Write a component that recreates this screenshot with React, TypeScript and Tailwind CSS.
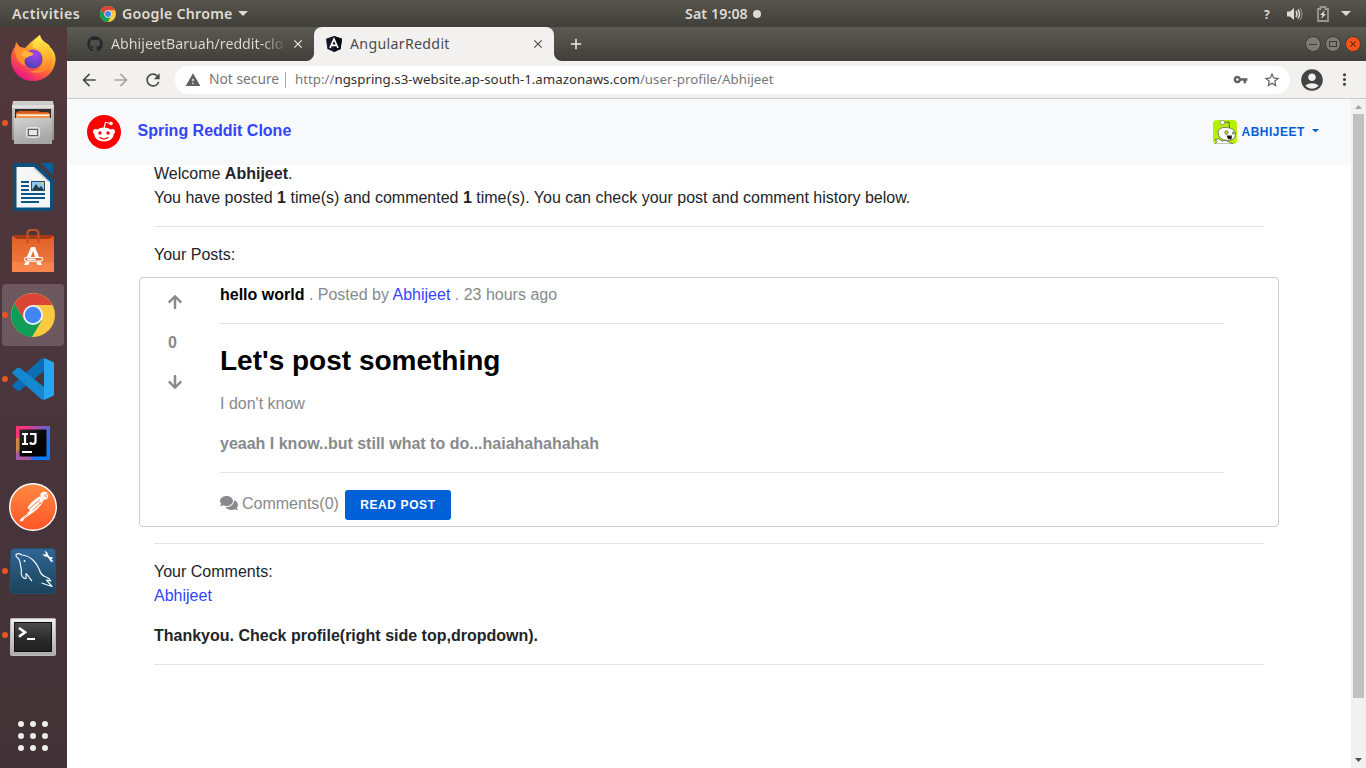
import type { ReactNode } from "react";
import { FaArrowDown, FaArrowUp, FaComments, FaGithub } from "react-icons/fa";
import {
  MdAccountCircle,
  MdAdd,
  MdArrowBack,
  MdArrowForward,
  MdClose,
  MdMoreVert,
  MdRefresh,
  MdStarBorder,
  MdVpnKey,
  MdWarning,
} from "react-icons/md";

function ChromeLogo({ className }: { className: string }) {
  return (
    <svg viewBox="0 0 44 44" className={className}>
      <circle cx="22" cy="22" r="22" fill="#fdca3f" />
      <path d="M22 22 L22 12 L41.5 12 A22 22 0 0 0 3.4 10.5 L13.3 27Z" fill="#db4437" />
      <path d="M3.4 10.5 A22 22 0 0 0 21 44 L31 27 L22 22 L13.3 27Z" fill="#0f9d58" />
      <circle cx="22" cy="22" r="10" fill="#f4f4f4" />
      <circle cx="22" cy="22" r="8.2" fill="#4285f4" />
    </svg>
  );
}

function Icon({ children }: { children: ReactNode }) {
  return (
    <svg viewBox="1 0 64 64" className="h-16 w-16">
      {children}
    </svg>
  );
}

function FirefoxIcon() {
  return (
    <Icon>
      <defs>
        <linearGradient id="ffBody" x1="0.8" y1="0.1" x2="0.25" y2="0.95">
          <stop offset="0" stopColor="#fff14a" />
          <stop offset="0.35" stopColor="#ffa52a" />
          <stop offset="0.65" stopColor="#ff5a3c" />
          <stop offset="1" stopColor="#e8158a" />
        </linearGradient>
        <linearGradient id="ffTail" x1="0.4" y1="0" x2="0.7" y2="1">
          <stop offset="0" stopColor="#fff44f" />
          <stop offset="0.6" stopColor="#ffb82e" />
          <stop offset="1" stopColor="#ff7a30" />
        </linearGradient>
        <radialGradient id="ffGlobe" cx="0.6" cy="0.25" r="0.8">
          <stop offset="0" stopColor="#a644ee" />
          <stop offset="1" stopColor="#4a3fb5" />
        </radialGradient>
      </defs>
      <path d="M11 32 C11 26 13 22 15 20 L16 15 L20 20 L25 21 L31 15 L40 8 C41 14 47 16 49 18 L50 20 C55 25 56 30 55.5 34 C54 46 45 54 33 54 C20 54 11 44 11 32Z" fill="url(#ffBody)" />
      <path d="M40 8 C34 12 32 17 33 21 C41 21 44 28 43 34 C42 42 36 45 29 44 C36 48 47 46 51 38 C54 30 52 24 49 20 C46 16 40 13 40 8Z" fill="url(#ffTail)" opacity="0.85" />
      <circle cx="33" cy="32" r="9.5" fill="url(#ffGlobe)" />
      <path d="M15 20 L20 20 L24 22 L33 26 C34 28 30 29 27 30 C24 32 24 36 26 39 C19 37 14 29 15 20Z" fill="#ff9030" />
      <path d="M24 23 L33 27 C33 29 29 28.5 26 31 L21 28Z" fill="#ffb43c" />
    </Icon>
  );
}

function FilesIcon() {
  return (
    <Icon>
      <defs>
        <linearGradient id="fileBox" x1="0" y1="0" x2="0" y2="1">
          <stop offset="0" stopColor="#d0d0d0" />
          <stop offset="1" stopColor="#8e8e8e" />
        </linearGradient>
        <linearGradient id="fileFront" x1="0" y1="0" x2="0.4" y2="1">
          <stop offset="0" stopColor="#d2d2d2" />
          <stop offset="1" stopColor="#a6a6a6" />
        </linearGradient>
      </defs>
      <path d="M13 10 H53 L54 16 V49 H12 V16Z" fill="url(#fileBox)" />
      <rect x="12" y="14" width="42" height="3" fill="#dedede" />
      <rect x="15" y="18" width="36" height="10" fill="#332e2b" />
      <path d="M17 21 L19 20 H38 L40 21 H48 L49 22 V28 H16 V22Z" fill="#d45a18" />
      <path d="M16 22.5 H50 V28 H16Z" fill="#f0924a" />
      <path d="M17 23.5 H49 V25 H17Z" fill="#fff0de" />
      <rect x="14" y="27" width="38" height="26" fill="url(#fileFront)" />
      <rect x="26.5" y="36.5" width="13" height="10" rx="2" fill="#bdbdbd" stroke="#e8e8e8" />
      <rect x="28.5" y="38.5" width="9" height="6" fill="#e6e6e6" stroke="#606060" />
    </Icon>
  );
}

function WriterIcon() {
  return (
    <Icon>
      <path d="M15 8 H35 L53 24 V54 Q53 56 51 56 H15 Q13 56 13 54 V10 Q13 8 15 8Z" fill="#0b4f7c" />
      <path d="M41 8 H51 Q53 8 53 10 V20 Q47 15 41 8Z" fill="#055f9c" />
      <path d="M16.5 12 H34 L50 27 V52.5 H16.5Z" fill="#f6f6f6" />
      <path d="M34 12 V14 L49 28 H50 V27Z" fill="#cfcfcf" />
      <path d="M21 27 H29 M21 31 H29 M21 35 H29 M21 39 H45 M21 43 H45 M21 47 H39" stroke="#0b5686" strokeWidth="2" />
      <rect x="31.5" y="26.5" width="13" height="9" fill="#8dc8ee" stroke="#27506e" />
      <path d="M32 35 L36 29 L39 33 L41 31 L44 35Z" fill="#283c48" />
      <circle cx="42.5" cy="28.5" r="1.5" fill="#ecc84a" />
    </Icon>
  );
}

function SoftwareIcon() {
  return (
    <Icon>
      <defs>
        <linearGradient id="bag" x1="0" y1="0" x2="0" y2="1">
          <stop offset="0" stopColor="#e06027" />
          <stop offset="1" stopColor="#f47f45" />
        </linearGradient>
      </defs>
      <path d="M13 16 H53 L54 20 H12Z" fill="#a83b13" />
      <path d="M12 17 L17 20 H49 L54 17 V53 H12Z" fill="url(#bag)" />
      <path d="M12 43 H54 V53 H12Z" fill="#fa8c51" opacity="0.6" />
      <path d="M27.5 24 V15 Q27.5 11 31 11 H35 Q38.5 11 38.5 15 V24" fill="none" stroke="#c84f21" strokeWidth="2.2" />
      <path d="M31 28 H35 L39.5 39 H35.5 L33 32 L30.500 39 H26.500Z M25.500 43 H29.500 L28.500 46 H24Z M36.500 43 H40.500 L42 46 H37.500Z" fill="#fff" />
      <rect x="24.5" y="38.5" width="18" height="3.6" rx="1.8" fill="#e9662c" stroke="#fff" strokeWidth="1.200" />
      <path d="M27 40.300 H35.500" stroke="#fff" strokeWidth="1.6" />
    </Icon>
  );
}

function CodeIcon() {
  return (
    <Icon>
      <path d="M44 53 V11 L53 15 Q54 15.500 54 17 V47 Q54 48.500 53 49Z" fill="#27a4f2" />
      <path d="M44 11 V24 L20 43.500 Q18.5 44.500 17 43.500 L12.5 39.500 Q12 38.500 13 37.500 L41 12Z" fill="#0b6db3" />
      <path d="M44 53 V40 L20 21 Q18.5 20 17 21 L12.5 25 Q12 26 13 27 L41 52Z" fill="#1488cf" />
    </Icon>
  );
}

function IntellijIcon() {
  return (
    <Icon>
      <defs>
        <linearGradient id="ij" x1="0" y1="0" x2="1" y2="0.6">
          <stop offset="0.2" stopColor="#fe3476" />
          <stop offset="0.65" stopColor="#765ec8" />
          <stop offset="1" stopColor="#087cfa" />
        </linearGradient>
        <linearGradient id="ijInner" x1="0" y1="0" x2="1" y2="1">
          <stop offset="0" stopColor="#2a2a2a" />
          <stop offset="0.6" stopColor="#050505" />
        </linearGradient>
      </defs>
      <rect x="16" y="15" width="34" height="34" fill="url(#ij)" />
      <path d="M16 27 L20 27 V40 L16 43Z" fill="#ce8643" />
      <path d="M16 42 L20 38 L32 49 H16Z" fill="#a85aa8" />
      <path d="M32 49 L47 35 L50 30 V49Z" fill="#087cfa" />
      <rect x="19.500" y="18.500" width="27" height="27" fill="url(#ijInner)" />
      <path d="M22 23 H28 M25 23 V33 M22 33 H28 M30 23 H36.500 M35.500 23 V30 Q35.500 33 33 33 Q31 33 29.800 31.500" fill="none" stroke="#fff" strokeWidth="2.200" />
      <rect x="22" y="40" width="10" height="2" fill="#fff" />
    </Icon>
  );
}

function PostmanIcon() {
  return (
    <Icon>
      <defs>
        <linearGradient id="pm" x1="0" y1="0" x2="0" y2="1">
          <stop offset="0" stopColor="#ff8a43" />
          <stop offset="1" stopColor="#ff5526" />
        </linearGradient>
      </defs>
      <circle cx="33" cy="32" r="23.3" fill="url(#pm)" stroke="#fff" strokeWidth="1.4" />
      <circle cx="44.3" cy="20.700" r="4" fill="#fff" />
      <path d="M44.300 20.700 L48 18.500 M44.300 20.700 L47.500 22.500" stroke="#ff7437" strokeWidth="0.800" />
      <path d="M40 21.500 C37 22.500 30 27.500 27.500 33 L30 35.500 L25.500 40 L20.500 44 L19.500 46.500 L23 46 L24.500 43.500 L33 37.500 C37.500 34.500 42 29.500 43.500 25.500Z" fill="#fff" />
      <path d="M40 24.500 L29 34 M42 26.500 L33 35.500 M28 38.500 L24.500 42.500 M39 27 L41 29" fill="none" stroke="#ff7437" strokeWidth="0.9" />
    </Icon>
  );
}

function MysqlIcon() {
  return (
    <Icon>
      <defs>
        <linearGradient id="sql" x1="0" y1="0" x2="0" y2="1">
          <stop offset="0" stopColor="#2f6796" />
          <stop offset="1" stopColor="#1b4259" />
        </linearGradient>
      </defs>
      <rect x="10.5" y="9.5" width="45" height="45" rx="4" fill="url(#sql)" stroke="#27506f" />
      <path d="M18 19 C13.500 16 17 13 22 16 C31 17 37 24 39.500 31 C40.500 35 43 37 46 38 Q49 39 51 42 L46.500 41 L52 47.500 L41.500 44 M18 19 C21 22 20 27 21.500 31 C20 36 23 40 26 39.500 L26 34.500 C28 36 30 40 32 42" fill="none" stroke="#eef5fa" strokeWidth="1.2" strokeLinejoin="round" />
      <circle cx="24.5" cy="22" r="0.9" fill="#fff" />
      <path d="M42.500 15 Q44 18.500 47 17.500 L49.500 20.500 Q50 23.500 53.500 22.500 L51.500 20.500 L53 18.500 Q51.500 17.500 50 18.300 L47.800 15.500 Q48 12.500 44.500 12 L46 14.500 L45 15.800Z" fill="#fff" />
    </Icon>
  );
}

function TerminalIcon() {
  return (
    <Icon>
      <defs>
        <linearGradient id="term" x1="0" y1="0" x2="0" y2="1">
          <stop offset="0" stopColor="#4b4c4b" />
          <stop offset="0.55" stopColor="#2b2c2b" />
          <stop offset="1" stopColor="#1e1f1e" />
        </linearGradient>
        <linearGradient id="termFrame" x1="0" y1="0" x2="0" y2="1">
          <stop offset="0" stopColor="#efefef" />
          <stop offset="1" stopColor="#aaaaaa" />
        </linearGradient>
      </defs>
      <rect x="10.5" y="15.5" width="45" height="37" rx="1" fill="url(#termFrame)" stroke="#b9b9b9" />
      <rect x="14.5" y="19.5" width="37" height="29" fill="url(#term)" stroke="#111" />
      <path d="M19 25 L25 29.3 L19 33.600" fill="none" stroke="#fff" strokeWidth="2.6" />
      <rect x="27" y="35" width="8" height="2" fill="#fff" />
    </Icon>
  );
}

const launchers: { name: string; running: boolean; icon: ReactNode }[] = [
  { name: "firefox", running: false, icon: <FirefoxIcon /> },
  { name: "files", running: true, icon: <FilesIcon /> },
  { name: "writer", running: false, icon: <WriterIcon /> },
  { name: "software", running: false, icon: <SoftwareIcon /> },
  { name: "chrome", running: true, icon: <ChromeLogo className="h-11 w-11" /> },
  { name: "code", running: true, icon: <CodeIcon /> },
  { name: "intellij", running: false, icon: <IntellijIcon /> },
  { name: "postman", running: false, icon: <PostmanIcon /> },
  { name: "mysql", running: true, icon: <MysqlIcon /> },
  { name: "terminal", running: true, icon: <TerminalIcon /> },
];

function Dock() {
  return (
    <nav className="flex w-[67px] shrink-0 flex-col bg-linear-to-b from-[#51383b] via-[#49353c] to-[#403236]">
      {launchers.map((l) => (
        <div key={l.name} className="relative flex h-16 w-[66px] items-center justify-center">
          {l.name === "chrome" && <span className="absolute top-px left-[2px] h-[62px] w-[62px] rounded bg-[#6c585e]" />}
          <span className="relative">{l.icon}</span>
          {l.running && <span className="absolute top-[29px] left-[2px] h-[6px] w-[6px] rounded-full bg-[#e95420]" />}
        </div>
      ))}
      <div className="mt-[54px] grid w-fit grid-cols-3 gap-[6px] self-start pl-[18px]">
        {Array.from({ length: 9 }, (_, i) => (
          <span key={i} className="h-[6px] w-[6px] rounded-full bg-[#eeeeec]" />
        ))}
      </div>
    </nav>
  );
}

function TopBar() {
  return (
    <header className="flex h-[27px] shrink-0 items-center bg-linear-to-b from-[#58554c] to-[#403f3a] text-[14.2px] leading-[27px] font-semibold text-[#dfdbd2]">
      <span className="ml-3 w-[88px] tracking-[0.5px] whitespace-nowrap">Activities</span>
      <ChromeLogo className="h-4 w-4" />
      <span className="ml-[6px] w-[112px] tracking-[0.25px] whitespace-nowrap">Google Chrome</span>
      <svg viewBox="0 0 10 5" className="ml-[4px] h-[5px] w-[10px]">
        <path d="M0 0H10L5 5Z" fill="#dfdbd2" />
      </svg>
      <span className="ml-[437px] w-[65px] tracking-[0.1px] whitespace-nowrap">Sat 19:08</span>
      <span className="ml-[3px] h-2 w-2 rounded-full bg-[#dfdbd2]" />
      <div className="ml-auto flex items-center">
        <span className="w-[23px] pt-[3px] text-[12px] leading-4 font-bold">?</span>
        <svg viewBox="0 0 16 14" className="h-[14px] w-4">
          <path d="M0 4.5H3L7 1V13L3 9.5H0Z" fill="#dfdbd2" />
          <path d="M9 4Q11 7 9 10M11 2.5Q14 7 11 11.5" fill="none" stroke="#dfdbd2" strokeWidth="1.5" />
          <path d="M13 1Q17 7 13 13" fill="none" stroke="#8d8a82" strokeWidth="1.2" />
        </svg>
        <svg viewBox="0 0 12 16" className="ml-[14px] h-4 w-3">
          <path d="M1 3H3.5V1H8.5V3H11V15H1Z" fill="none" stroke="#9a978f" strokeWidth="1.8" />
          <path d="M8 4L3 9H5.5L4 13L9 8H6.5Z" fill="#dfdbd2" />
        </svg>
        <svg viewBox="0 0 10 5" className="mr-[15px] ml-[12px] h-[5px] w-[10px]">
          <path d="M0 0H10L5 5Z" fill="#dfdbd2" />
        </svg>
      </div>
    </header>
  );
}

function AngularBadge() {
  return (
    <svg viewBox="0 0 16 16" className="h-4 w-4">
      <path d="M8 0L16 2.8L14.6 13L8 16L1.4 13L0 2.8Z" fill="#15182b" />
      <path d="M8 0L16 2.8L14.6 13L8 16Z" fill="#05070f" />
      <path d="M4 12L8 3L12 12M5.5 9.3H10.5" fill="none" stroke="#fff" strokeWidth="1.7" />
    </svg>
  );
}

function TabStrip() {
  return (
    <div className="flex h-[34px] items-center bg-linear-to-b from-[#5c5b52] to-[#403f3a]">
      <div className="flex h-full w-[247px] items-center pl-5">
        <FaGithub className="h-4 w-4 shrink-0 text-[#24292e]" />
        <span className="ml-2 w-[176px] bg-linear-to-r from-[#dfdbd2] from-85% to-transparent bg-clip-text text-[14.2px] whitespace-nowrap text-transparent">
          AbhijeetBaruah/reddit-clo
        </span>
        <MdClose className="ml-1 h-[14px] w-[14px] shrink-0 text-[#eeebe4]" />
      </div>
      <div className="relative flex h-full w-60 items-center rounded-t-lg bg-[#f2f1f0] pl-3">
        <span className="absolute bottom-0 -left-2 h-2 w-2 bg-[radial-gradient(circle_at_0_0,transparent_7.5px,#f2f1f0_8.5px)]" />
        <span className="absolute -right-2 bottom-0 h-2 w-2 bg-[radial-gradient(circle_at_100%_0,transparent_7.5px,#f2f1f0_8.5px)]" />
        <AngularBadge />
        <span className="ml-2 text-[14.2px] tracking-[0.3px] whitespace-nowrap text-[#4c4c4c]">AngularReddit</span>
        <MdClose className="mr-[9px] ml-auto h-[14px] w-[14px] text-[#4c4c4c]" />
      </div>
      <MdAdd className="ml-[13px] h-[18px] w-[18px] text-[#eeebe4]" />
      <div className="mr-[5px] ml-auto flex gap-1">
        <span className="flex h-4 w-4 items-center justify-center rounded-full border border-[#3c3b37] bg-[#7d7b72]">
          <span className="h-px w-2 bg-[#3c3b37]" />
        </span>
        <span className="flex h-4 w-4 items-center justify-center rounded-full border border-[#3c3b37] bg-[#7d7b72]">
          <span className="h-[6px] w-2 border border-[#3c3b37]" />
        </span>
        <span className="flex h-4 w-4 items-center justify-center rounded-full border border-[#5a3526] bg-[#f4551c]">
          <MdClose className="h-[10px] w-[10px] text-[#4a2013]" />
        </span>
      </div>
    </div>
  );
}

function Toolbar() {
  return (
    <div className="flex h-[38px] items-center border-b border-[#cdcccb] bg-[#f2f1f0] pl-3">
      <MdArrowBack className="h-5 w-5 text-[#4c4c4c]" />
      <MdArrowForward className="ml-3 h-5 w-5 text-[#a5a5a5]" />
      <MdRefresh className="ml-3 h-5 w-5 text-[#4c4c4c]" />
      <div className="ml-3 flex h-7 w-[1115px] items-center rounded-full bg-white text-[13.3px] text-[#777]">
        <MdWarning className="ml-[10px] h-4 w-4 text-[#606060]" />
        <span className="ml-2 w-[76px] text-[13.8px] whitespace-nowrap">Not secure</span>
        <span className="h-4 w-px bg-[#aaa]" />
        <span className="ml-[9px] whitespace-nowrap">
          http://<span className="text-[#303030]">ngspring.s3-website.ap-south-1.amazonaws.com</span>/user-profile/Abhijeet
        </span>
        <MdVpnKey className="ml-auto h-[15px] w-[15px] text-[#606060]" />
        <MdStarBorder className="mr-[9px] ml-[15px] h-[18px] w-[18px] text-[#606060]" />
      </div>
      <MdAccountCircle className="ml-[9px] h-[26px] w-[26px] text-[#434343]" />
      <MdMoreVert className="ml-[10px] h-[19px] w-[19px] text-[#434343]" />
    </div>
  );
}

function RedditLogo() {
  return (
    <svg viewBox="0 0 34 34" className="h-[34px] w-[34px]">
      <circle cx="17" cy="17" r="17" fill="#ff0000" />
      <circle cx="8.5" cy="16.5" r="2.5" fill="#fff" />
      <circle cx="25.5" cy="16.5" r="2.5" fill="#fff" />
      <ellipse cx="17" cy="19.5" rx="9.7" ry="7" fill="#fff" />
      <path d="M17 13L18.5 7.3L24 8.5" fill="none" stroke="#fff" strokeWidth="1.1" />
      <circle cx="24" cy="8.5" r="1.8" fill="#fff" />
      <circle cx="13" cy="18" r="1.7" fill="#ff0000" />
      <circle cx="21" cy="18" r="1.7" fill="#ff0000" />
      <path d="M13 22.5Q17 25.5 21 22.5" fill="none" stroke="#ff0000" strokeWidth="1.1" strokeLinecap="round" />
    </svg>
  );
}

function Avatar() {
  return (
    <svg viewBox="0 0 24 24" className="h-6 w-6 rounded">
      <rect width="24" height="24" fill="#b5f000" />
      <path d="M11 2.500L16 2L16.500 8" fill="none" stroke="#5a6a22" />
      <circle cx="9.5" cy="2.5" r="2.3" fill="#fff" stroke="#666" strokeWidth="0.6" />
      <path d="M5 12Q6 7 13 7.500Q22 8 22.500 14Q22 20.500 15 20.500Q5 20 5 12Z" fill="#fff" stroke="#555" strokeWidth="0.7" />
      <path d="M2 24L4 21.500L2 19.500L6 19L9 21L13 20.500L20 24Z" fill="#fff" stroke="#555" strokeWidth="0.7" />
      <circle cx="13.5" cy="12.5" r="1.700" fill="#b5f000" stroke="#555" strokeWidth="0.8" />
      <circle cx="20.500" cy="13" r="1.2" fill="#b5f000" stroke="#555" strokeWidth="0.7" />
      <path d="M13.500 15.500L19 15.500L18.500 19.500L15 19Z" fill="#1d1d1d" />
    </svg>
  );
}

function PostCard() {
  return (
    <article className="-mx-[15px] flex h-[250px] w-[1140px] rounded border border-[#c9cbcd] bg-white text-[#878a8c]">
      <div className="flex w-20 shrink-0 flex-col items-start pt-[16px] pl-7">
        <FaArrowUp className="h-4 w-[14px]" />
        <span className="mt-[21px] font-bold">0</span>
        <FaArrowDown className="mt-[19px] h-4 w-[14px]" />
      </div>
      <div className="w-[1004px] pt-[5px]">
        <div>
          <span className="font-bold text-black">hello world</span> . Posted by <span className="text-[#3344ff]">Abhijeet</span> . 23 hours ago
        </div>
        <hr className="my-4 border-[#e3e4e4]" />
        <h2 className="pt-[4px] text-[28px] leading-[34px] font-bold text-black">Let's post something</h2>
        <p className="mt-[14px]">I don't know</p>
        <p className="mt-4 font-bold">yeaah I know..but still what to do...haiahahahahah</p>
        <hr className="mt-[16px] mb-[17px] border-[#e3e4e4]" />
        <div className="flex h-[30px] items-center">
          <FaComments className="mb-[4px] h-4 w-[18px]" />
          <span className="mb-[3px] ml-[4px]">Comments(0)</span>
          <button className="ml-[6px] h-[30px] w-[106px] rounded-[3px] bg-[#0060d7] text-[12px] font-bold tracking-[0.6px] text-white">READ POST</button>
        </div>
      </div>
    </article>
  );
}

function Page() {
  return (
    <div className="flex min-h-0 flex-1 bg-white font-['Liberation_Sans',Arial,sans-serif] text-base leading-6 text-[#212529]">
      <div className="flex w-[1284px] flex-col">
        <div className="z-10 flex h-[66px] shrink-0 items-center bg-[#f8f9fb] pl-5">
          <RedditLogo />
          <span className="mb-[3px] ml-[16.5px] font-bold text-[#3344ff]">Spring Reddit Clone</span>
          <span className="ml-auto">
            <Avatar />
          </span>
          <span className="ml-[4.5px] w-[70.5px] text-[12px] font-bold tracking-[0.5px] text-[#0060d7]">ABHIJEET</span>
          <svg viewBox="0 0 7 4" className="mr-8 mb-[2px] h-[4px] w-[7px]">
            <path d="M0 0H7L3.5 3.5Z" fill="#0060d7" />
          </svg>
        </div>
        <main className="-mt-[3px] ml-[87px] w-[1110px]">
          <div>
            Welcome <b>Abhijeet</b>.
          </div>
          <div>
            You have posted <b>1</b> time(s) and commented <b>1</b> time(s). You can check your post and comment history below.
          </div>
          <hr className="my-4 border-[#e3e4e4]" />
          <div className="mb-[10px]">Your Posts:</div>
          <PostCard />
          <hr className="my-4 border-[#e3e4e4]" />
          <div>Your Comments:</div>
          <div className="text-[#3344ff]">Abhijeet</div>
          <p className="mt-4 font-bold">Thankyou. Check profile(right side top,dropdown).</p>
          <hr className="my-4 border-[#e3e4e4]" />
        </main>
      </div>
      <div className="flex w-[15px] flex-col items-center bg-[#f1f1f1]">
        <svg viewBox="0 0 7 4" className="mt-[6px] h-[4px] w-[7px]">
          <path d="M0 4H7L3.5 0Z" fill="#a3a3a3" />
        </svg>
        <div className="mt-[5px] h-[584px] w-[11px] bg-[#c1c1c1]" />
        <svg viewBox="0 0 7 4" className="mt-auto mb-[6px] h-[4px] w-[7px]">
          <path d="M0 0H7L3.5 4Z" fill="#505050" />
        </svg>
      </div>
    </div>
  );
}

export default function App() {
  return (
    <div className="flex h-[768px] w-[1366px] flex-col overflow-hidden font-['Noto_Sans',sans-serif]">
      <TopBar />
      <div className="flex min-h-0 flex-1">
        <Dock />
        <div className="flex min-w-0 flex-1 flex-col">
          <TabStrip />
          <Toolbar />
          <Page />
        </div>
      </div>
    </div>
  );
}
